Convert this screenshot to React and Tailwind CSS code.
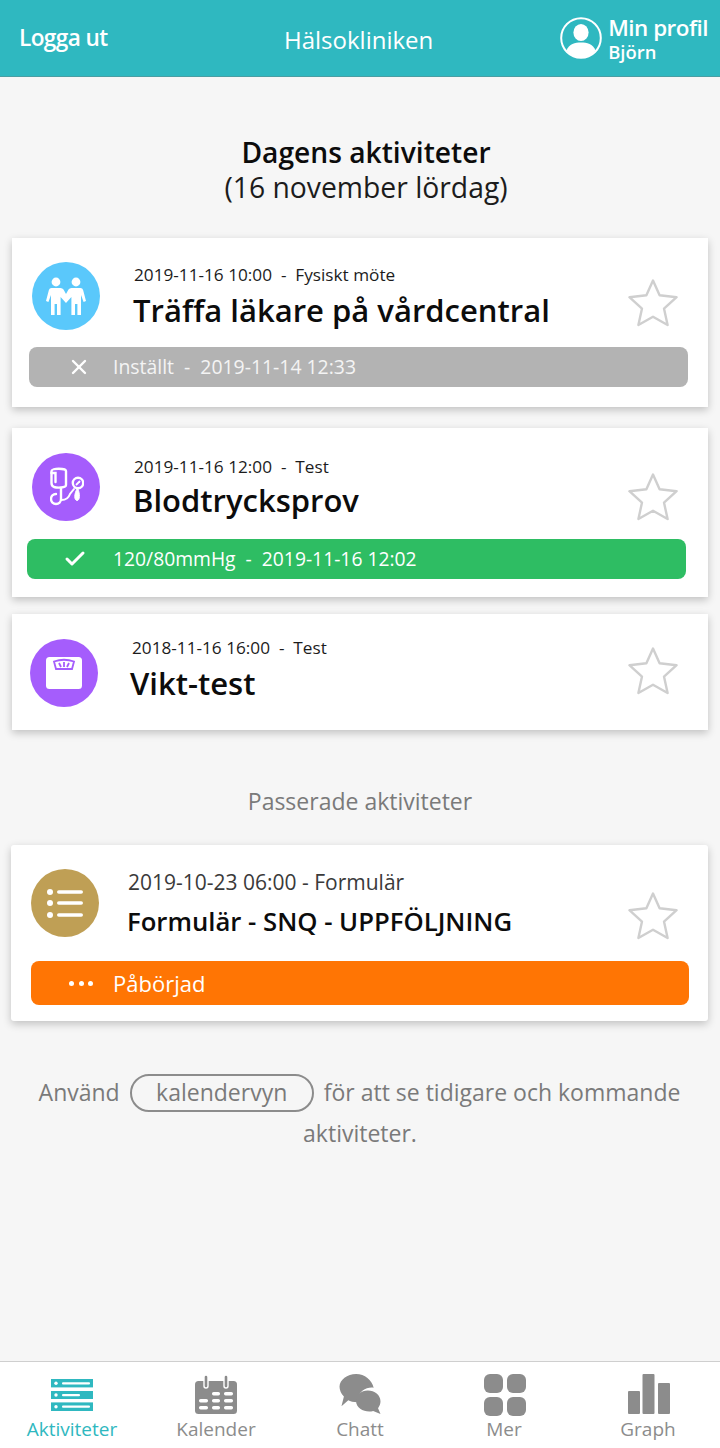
import { X, Check } from "lucide-react";

const font = { fontFamily: '"Open Sans", sans-serif' };

const StarIcon = () => (
  <svg width="52" height="50" viewBox="0 0 52 50" fill="none" stroke="#cfcfcf" strokeWidth="2.4" strokeLinejoin="round">
    <path d="M26 2.5 L32.6 17.2 L49.6 19.2 L37 30.6 L40.6 47 L26 38.8 L11.4 47 L15 30.6 L2.4 19.2 L19.4 17.2 Z" />
  </svg>
);

const PeopleIcon = () => (
  <svg width="40" height="38" viewBox="0 0 40 38" fill="white">
    <circle cx="10" cy="5" r="4.4" />
    <circle cx="30" cy="5" r="4.4" />
    <path d="M5.5 11 h9 q2 0 3 1.6 L20 17 L22.5 12.6 q1 -1.6 3 -1.6 h9 q2 0 2.6 2 L40 24 l-2.4 1 L35 18 V38 h-3.6 V27 h-2.4 V38 h-3.6 V20 L20 26 L14.6 20 V38 H11 V27 H8.6 V38 H5 V18 L2.4 25 L0 24 L2.9 13 q.6 -2 2.6 -2 Z" />
  </svg>
);

const BloodPressureIcon = () => (
  <svg width="34" height="40" viewBox="0 0 34 40" fill="none" stroke="white" strokeWidth="2.4" strokeLinecap="round" className="ml-[2px]">
    <path d="M1.5 4 C1.5 1 16 1 16 4 V18 C16 21 7 21 4 20 Q1.5 19 1.5 16 Z" />
    <path d="M1.5 6 H5.5 V15" />
    <path d="M11 21 V32 A5 5 0 1 1 6 27" />
    <path d="M11.5 33 Q18 33 20 27 L24 22" strokeWidth="2" />
    <circle cx="28" cy="16" r="5.2" />
    <path d="M26.5 17.5 L29.5 14.5" strokeWidth="1.8" />
    <path d="M27 22 C24 27 24 33 27 33.5 C30 33.5 30 27 28 22 Z" fill="white" strokeWidth="1" />
  </svg>
);

const ScaleIcon = () => (
  <svg width="36" height="32" viewBox="0 0 36 32">
    <rect x="0" y="0" width="36" height="32" rx="3.5" fill="white" />
    <path d="M8 4.5 Q18 1 28 4.5 L26 12 H10 Z" fill="none" stroke="#a55dfc" strokeWidth="1.8" />
    <path d="M13 6 L15 10 M18 5 V10 M23 6 L21 10" stroke="#a55dfc" strokeWidth="1.8" />
  </svg>
);

const ListIcon = () => (
  <svg width="36" height="30" viewBox="0 0 36 30" fill="white">
    <circle cx="3" cy="4" r="3" />
    <circle cx="3" cy="15" r="3" />
    <circle cx="3" cy="27" r="3" />
    <rect x="10" y="2.2" width="26" height="3.6" rx="1.8" />
    <rect x="10" y="13.2" width="26" height="3.6" rx="1.8" />
    <rect x="10" y="25.2" width="26" height="3.6" rx="1.8" />
  </svg>
);

const ProfileIcon = () => (
  <svg width="42" height="42" viewBox="0 0 42 42" fill="white">
    <circle cx="21" cy="21" r="19.8" fill="none" stroke="white" strokeWidth="2" />
    <ellipse cx="21" cy="15.5" rx="7.6" ry="8.6" />
    <path d="M6.5 33.5 C9 27 15 25.5 21 25.5 C27 25.5 33 27 35.5 33.5 C32 38 27 40.5 21 40.5 C15 40.5 10 38 6.5 33.5 Z" />
  </svg>
);

const ActivitiesIcon = () => (
  <svg width="42" height="32" viewBox="0 0 42 32" fill="#2fb8c0">
    <rect x="0" y="0" width="42" height="8.4" />
    <rect x="0" y="12" width="42" height="8" />
    <rect x="0" y="23.4" width="42" height="8.6" />
    <g fill="white">
      <circle cx="5" cy="4.2" r="1.7" />
      <circle cx="5" cy="16" r="1.7" />
      <circle cx="5" cy="27.7" r="1.7" />
      <rect x="11" y="3.2" width="28" height="2.2" rx="1" />
      <rect x="11" y="15" width="18" height="2.2" rx="1" />
      <rect x="11" y="26.6" width="28" height="2.2" rx="1" />
    </g>
  </svg>
);

const CalendarIcon = () => (
  <svg width="42" height="39" viewBox="0 0 42 39" fill="#8c8c8c">
    <rect x="0" y="6" width="42" height="33" rx="3.5" />
    <g fill="none" stroke="white" strokeWidth="5.4" strokeLinecap="round">
      <path d="M11 3 V11 M31 3 V11" />
    </g>
    <g fill="none" stroke="#8c8c8c" strokeWidth="2.6" strokeLinecap="round">
      <path d="M11 2 V11 M31 2 V11" />
    </g>
    <g fill="white">
      <rect x="17" y="17" width="8" height="3.4" rx="1.6" />
      <rect x="29" y="17" width="9" height="3.4" rx="1.6" />
      <rect x="4" y="24" width="9" height="3.4" rx="1.6" />
      <rect x="17" y="24" width="8" height="3.4" rx="1.6" />
      <rect x="29" y="24" width="9" height="3.4" rx="1.6" />
      <rect x="4" y="31" width="9" height="3.4" rx="1.6" />
      <rect x="17" y="31" width="8" height="3.4" rx="1.6" />
      <rect x="29" y="31" width="9" height="3.4" rx="1.6" />
    </g>
  </svg>
);

const ChatIcon = () => (
  <svg width="42" height="40" viewBox="0 0 42 41" fill="#8c8c8c">
    <path d="M17 0 C26 0 33 6 35 14 C28 13 20 17 18.5 26 L18.5 29 Q12 29 9 27 L2 33 L4.5 23 C1.5 20 0 16 0 13 C0 6 8 0 17 0 Z" />
    <path d="M29 17 C36 17 42 21.5 42 28 C42 31 41 33 39.5 35 L42 41 L34.5 38 C27 40 17 36 17 28 C17 21.5 22 17 29 17 Z" />
  </svg>
);

const GridIcon = () => (
  <svg width="42" height="42" viewBox="0 0 42 42" fill="#8c8c8c">
    <rect x="0" y="0" width="19" height="19" rx="6" />
    <rect x="23" y="0" width="19" height="19" rx="6" />
    <rect x="0" y="23" width="19" height="19" rx="6" />
    <rect x="23" y="23" width="19" height="19" rx="6" />
  </svg>
);

const BarsIcon = () => (
  <svg width="42" height="40" viewBox="0 0 42 40" fill="#8c8c8c">
    <rect x="0" y="17" width="12" height="23" rx="1" />
    <rect x="14.5" y="0" width="12" height="40" rx="1" />
    <rect x="30" y="9" width="12" height="31" rx="1" />
  </svg>
);

const Tab = ({ icon, label, active, iconClass = "" }) => (
  <div className="flex-1 flex flex-col items-center">
    <div className={`h-[42px] ${iconClass}`}>{icon}</div>
    <span className={`text-[19px] leading-[26px] ${active ? "text-[#2fb8c0]" : "text-[#8c8c8c]"}`}>{label}</span>
  </div>
);

// rad med ikon, texter och stjärna
const CardRow = ({ circle, icon, date, title, titleClass, textClass, starClass }) => (
  <div className="flex items-start relative h-[68px]">
    <div className={`w-[68px] h-[68px] rounded-full flex items-center justify-center shrink-0 ${circle}`}>{icon}</div>
    <div className={textClass}>
      {date}
      <div className={titleClass}>{title}</div>
    </div>
    <div className={`absolute right-[29px] ${starClass}`}>
      <StarIcon />
    </div>
  </div>
);

const cardClass = "bg-white shadow-[0_3px_8px_rgba(0,0,0,0.22)]";
const titleBig = "font-semibold text-[31px] leading-[44px] text-[#0c0c0c] whitespace-nowrap";
const dateSmall = "text-[17.2px] leading-[24px] text-[#1c1c1c]";

export default function App() {
  return (
    <div style={font} className="w-[720px] h-[1448px] bg-[#f6f6f6] flex flex-col overflow-hidden">
      <header className="h-[77px] bg-[#2fb8c0] border-b border-[#4a9ea3] flex items-center text-white relative shrink-0">
        <span className="ml-[19px] text-[22.6px] font-semibold tracking-[-0.6px]">Logga ut</span>
        <span className="absolute left-[284px] top-[23px] text-[24px] leading-[34px] font-medium">Hälsokliniken</span>
        <div className="ml-auto flex items-center mr-[12px]">
          <ProfileIcon />
          <div className="ml-[6px] flex flex-col -mt-[2px]">
            <span className="text-[22.4px] leading-[28px] font-semibold tracking-[-0.5px]">Min profil</span>
            <span className="text-[18.4px] leading-[19px] font-semibold">Björn</span>
          </div>
        </div>
      </header>

      <main className="flex-1 flex flex-col">
        <div className="mt-[56px] text-center pl-[12px]">
          <div className="text-[28.2px] leading-[38px] font-semibold text-[#0c0c0c]">Dagens aktiviteter</div>
          <div className="text-[28.3px] leading-[32px] text-[#1c1c1c]">(16 november lördag)</div>
        </div>

        <div className={`mt-[35px] ml-[12px] w-[696px] h-[169px] pt-[24px] pl-[20px] ${cardClass}`}>
          <CardRow
            circle="bg-[#5ac8fb]"
            icon={<PeopleIcon />}
            textClass="ml-[34px] mt-[1px]"
            titleClass={`mt-[1px] -ml-[1px] ${titleBig}`}
            starClass="top-[16px]"
            title="Träffa läkare på vårdcentral"
            date={<div className={dateSmall}>2019-11-16 10:00&nbsp; - &nbsp;Fysiskt möte</div>}
          />
          <div className="mt-[17px] -ml-[3px] w-[659px] h-[40px] rounded-[8px] bg-[#b3b3b3] flex items-center text-white text-[19.4px] font-medium">
            <X size={24} strokeWidth={2.4} className="ml-[38px]" />
            <span className="ml-[22px] text-[#f4f4f4]">Inställt&nbsp; - &nbsp;2019-11-14 12:33</span>
          </div>
        </div>

        <div className={`mt-[21px] ml-[12px] w-[696px] h-[169px] pt-[25px] pl-[20px] ${cardClass}`}>
          <CardRow
            circle="bg-[#a55dfc]"
            icon={<BloodPressureIcon />}
            textClass="ml-[34px] mt-[2px]"
            titleClass={`-mt-[1px] -ml-[1px] ${titleBig}`}
            starClass="top-[19px]"
            title="Blodtrycksprov"
            date={<div className={dateSmall}>2019-11-16 12:00&nbsp; - &nbsp;Test</div>}
          />
          <div className="mt-[18px] -ml-[5px] w-[659px] h-[40px] rounded-[8px] bg-[#2ebd63] flex items-center text-white text-[19.3px] font-medium">
            <Check size={24} strokeWidth={3} className="ml-[36px]" />
            <span className="ml-[26px]">120/80mmHg&nbsp; - &nbsp;2019-11-16 12:02</span>
          </div>
        </div>

        <div className={`mt-[17px] ml-[12px] w-[696px] h-[116px] pt-[25px] pl-[18px] ${cardClass}`}>
          <CardRow
            circle="bg-[#a55dfc]"
            icon={<ScaleIcon />}
            textClass="ml-[34px] -mt-[3px]"
            titleClass={`mt-[1px] -ml-[2px] ${titleBig}`}
            starClass="top-[7px]"
            title="Vikt-test"
            date={<div className={dateSmall}>2018-11-16 16:00&nbsp; - &nbsp;Test</div>}
          />
        </div>

        <div className="mt-[56px] text-center text-[23px] leading-[30px] text-[#7a7a7a]">Passerade aktiviteter</div>

        <div className={`mt-[29px] ml-[11px] w-[697px] h-[176px] rounded-[3px] pt-[24px] pl-[20px] ${cardClass}`}>
          <CardRow
            circle="bg-[#bf9f55]"
            icon={<ListIcon />}
            textClass="ml-[29px] -mt-[1px]"
            titleClass="mt-[8px] -ml-[1px] font-semibold text-[25.7px] leading-[36px] text-[#0c0c0c] whitespace-nowrap"
            starClass="top-[22px]"
            title="Formulär - SNQ - UPPFÖLJNING"
            date={<div className="text-[21px] leading-[28px] text-[#3a3a3a]">2019-10-23 06:00 - Formulär</div>}
          />
          <div className="mt-[24px] w-[658px] h-[44px] rounded-[8px] bg-[#ff7504] flex items-center text-white text-[22px]">
            <span className="ml-[38px] flex gap-[4.5px]">
              <span className="w-[5px] h-[5px] rounded-full bg-white" />
              <span className="w-[5px] h-[5px] rounded-full bg-white" />
              <span className="w-[5px] h-[5px] rounded-full bg-white" />
            </span>
            <span className="ml-[20px]">Påbörjad</span>
          </div>
        </div>

        <div className="mt-[51px] text-center text-[23px] leading-[41px] text-[#7a7a7a]">
          <div className="flex items-center justify-center -ml-[1px]">
            Använd
            <span className="mx-[10px] w-[184px] h-[38px] rounded-full border-2 border-[#8c8c8c] flex items-center justify-center leading-none">kalendervyn</span>
            för att se tidigare och kommande
          </div>
          <div>aktiviteter.</div>
        </div>
      </main>

      <nav className="h-[87px] bg-white border-t border-[#cfcfcf] flex pt-[12px] shrink-0">
        <Tab active icon={<ActivitiesIcon />} iconClass="pt-[5px]" label="Aktiviteter" />
        <Tab icon={<CalendarIcon />} iconClass="pt-[1px]" label="Kalender" />
        <Tab icon={<ChatIcon />} label="Chatt" />
        <Tab icon={<GridIcon />} iconClass="ml-[2px]" label="Mer" />
        <Tab icon={<BarsIcon />} iconClass="ml-[2px]" label="Graph" />
      </nav>
    </div>
  );
}
